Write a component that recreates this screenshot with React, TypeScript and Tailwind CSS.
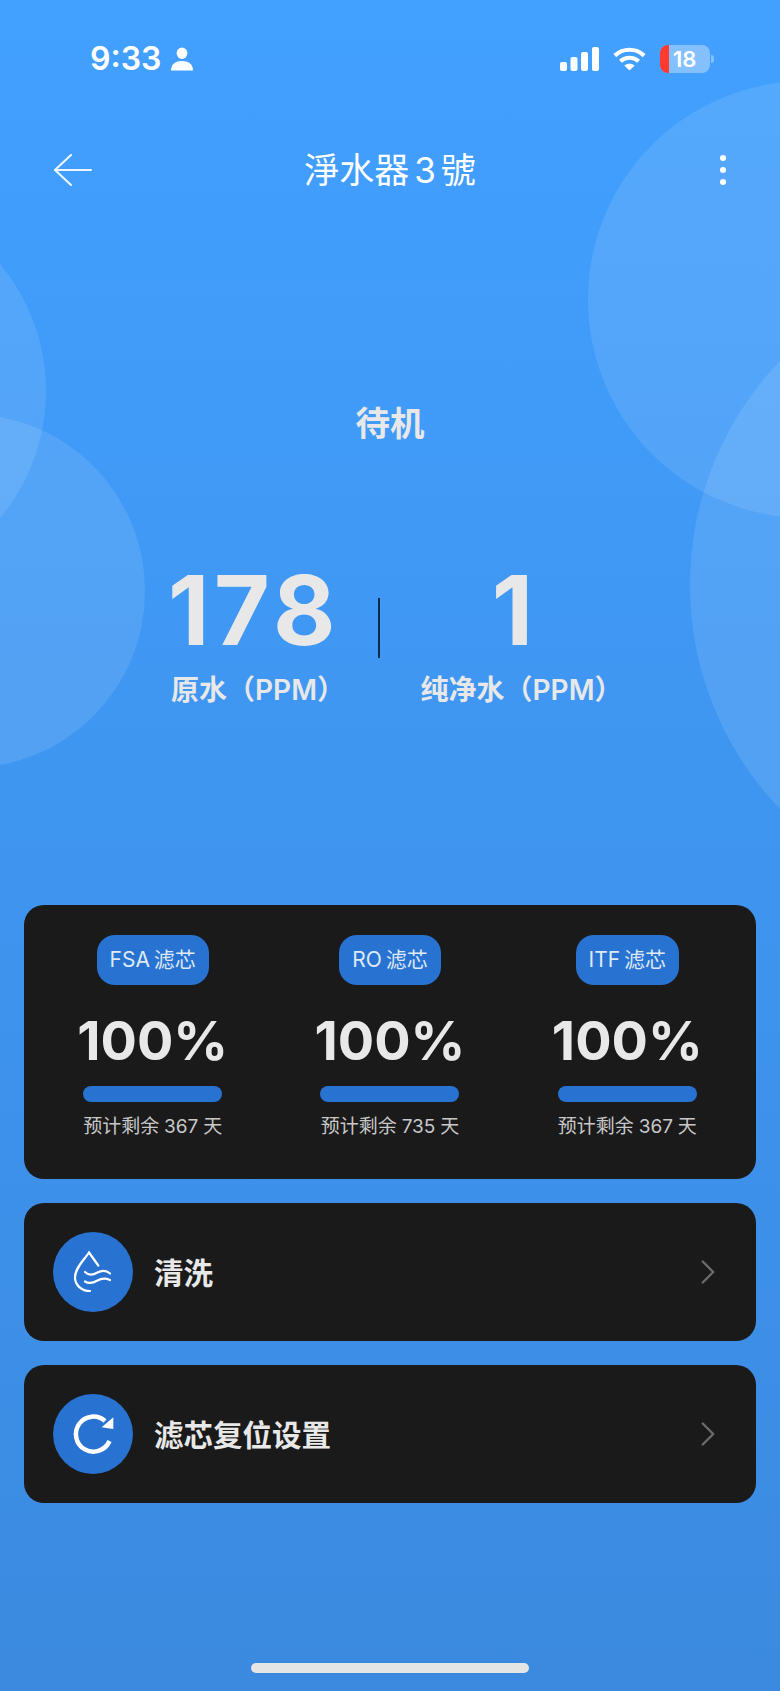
import { ChevronRight } from "lucide-react";

const fontStack = "font-['Inter','Noto_Sans_CJK_SC',sans-serif]";

const filters = [
  { name: "FSA 滤芯", days: 367 },
  { name: "RO 滤芯", days: 735 },
  { name: "ITF 滤芯", days: 367 },
];

function SignalIcon() {
  return (
    <svg width="39" height="24" viewBox="0 0 39 24" fill="#fff">
      <rect x="0" y="15" width="7" height="9" rx="2" />
      <rect x="10.5" y="10" width="7" height="14" rx="2" />
      <rect x="21" y="5" width="7" height="19" rx="2" />
      <rect x="32" y="0" width="7" height="24" rx="2" />
    </svg>
  );
}

function WifiIcon() {
  return (
    <svg width="33" height="24" viewBox="0 0 33 24" fill="none" stroke="#fff" strokeWidth="4.2">
      <path d="M1.8 8.6C10.2 .8 22.8 .8 31.2 8.6" />
      <path d="M7.4 14.2C12.6 9.6 20.4 9.6 25.6 14.2" />
      <path d="M16.5 23.6 11.3 18.6C14.3 16.2 18.7 16.2 21.7 18.6Z" fill="#fff" stroke="none" />
    </svg>
  );
}

function Battery() {
  return (
    <div className="flex items-center gap-[1px]">
      <div className="flex h-[28px] w-[50px] items-center overflow-hidden rounded-[8px] bg-white/35">
        <div className="h-full w-[9px] bg-[#ff3b30]" />
        <span className="ml-[4px] text-[22px] leading-none font-semibold text-white">18</span>
      </div>
      <div className="h-[8px] w-[3px] rounded-r-full bg-white/35" />
    </div>
  );
}

function BackArrow() {
  return (
    <svg width="38" height="32" viewBox="0 0 38 32" fill="none" stroke="#eef6ff" strokeWidth="2" strokeLinecap="round" strokeLinejoin="round">
      <path d="M17 1 1 16 17 31" />
      <path d="M1 16H37" />
    </svg>
  );
}

function DropIcon() {
  return (
    <svg width="80" height="80" viewBox="0 0 80 80" fill="none" stroke="#fff" strokeWidth="2.2" strokeLinecap="round">
      <path d="M45.3 33.5 36 20.5C31 28 22 36 22 45.5 22 53 28.5 59 37 59" />
      <path d="M32 40c4 4 8 3 12.500 .5s9-2 12.500 1" />
      <path d="M32 49.500c4 2.500 8 1.500 12.500-1s9-2 12.500-.5" />
    </svg>
  );
}

function ResetIcon() {
  return (
    <svg width="80" height="80" viewBox="0 0 80 80" fill="none">
      <path d="M52 27A17.5 17.5 0 1 0 56.500 47" stroke="#fff" strokeWidth="4.500" />
      <path d="M60.300 23.300V35L48.700 33.300Z" fill="#fff" />
    </svg>
  );
}

function ActionRow({ label, icon }: { label: string; icon: React.ReactNode }) {
  return (
    <div className="flex h-[138px] items-center rounded-[20px] bg-[#1a1a1a] pr-[27px] pl-[29px]">
      <div className="h-[80px] w-[80px] rounded-full bg-[#2873d1]">{icon}</div>
      <span className="ml-[21px] flex-1 pt-[2px] text-[29.5px] font-semibold text-[#e8e8e8]">{label}</span>
      <ChevronRight size={42} strokeWidth={1.4} className="text-[#6b6b6b]" />
    </div>
  );
}

export default function App() {
  return (
    <div className={`${fontStack} relative flex h-[1691px] w-[780px] flex-col overflow-hidden bg-gradient-to-b from-[#42a0ff] to-[#3b8ae0]`}>
      {/* background bubbles */}
      <div className="absolute top-[81px] left-[588px] h-[437px] w-[437px] rounded-full bg-white/10" />
      <div className="absolute top-[261px] left-[690px] h-[648px] w-[648px] rounded-full bg-white/10" />
      <div className="absolute top-[193px] left-[-350px] h-[396px] w-[396px] rounded-full bg-white/10" />
      <div className="absolute top-[414px] left-[-209px] h-[354px] w-[354px] rounded-full bg-white/10" />

      <div className="relative flex h-[95px] items-end justify-between pr-[66px] pl-[90px]">
        <div className="flex h-[72px] items-center text-white">
          <span className="text-[32px] font-semibold">9:33</span>
          <svg width="22" height="24" viewBox="0 0 23 24" fill="#fff" className="ml-[10px]">
            <ellipse cx="11.500" cy="6" rx="5.600" ry="6" />
            <path d="M0 24C0 17 5 14 11.500 14S23 17 23 24Z" />
          </svg>
        </div>
        <div className="flex h-[72px] items-center gap-[14px]">
          <SignalIcon />
          <WifiIcon />
          <Battery />
        </div>
      </div>

      <div className="relative mt-[35px] flex h-[80px] items-center justify-between px-[54px]">
        <div className="w-[38px]">
          <BackArrow />
        </div>
        <span className="text-[35px] font-normal text-white [word-spacing:-5px]">淨水器 3 號</span>
        <div className="flex w-[38px] flex-col items-end gap-[6px]">
          <div className="h-[6px] w-[6px] rounded-full bg-white" />
          <div className="h-[6px] w-[6px] rounded-full bg-white" />
          <div className="h-[6px] w-[6px] rounded-full bg-white" />
        </div>
      </div>

      <div className="relative mt-[189px] text-center text-[34.500px] leading-[50px] font-semibold text-[#e8e8e8]">待机</div>

      <div className="relative mt-[110px] flex items-end pl-[172px]">
        <div className="flex w-[172px] flex-col items-center">
          <span className="pr-[8px] text-[96px] leading-[103px] font-bold tracking-[4.500px] text-[#e8e8e8]">178</span>
          <span className="mt-[7.500px] text-[28px] leading-[40px] font-semibold whitespace-nowrap text-[#e8e8e8]">原水（PPM）</span>
        </div>
        <div className="mr-[42px] mb-[51.500px] ml-[34px] h-[60px] w-[1.500px] bg-[#0f2a4d]" />
        <div className="flex w-[200px] flex-col items-center">
          <span className="pr-[18px] text-[96px] leading-[103px] font-bold text-[#e8e8e8]">1</span>
          <span className="mt-[7.500px] text-[28px] leading-[40px] font-semibold whitespace-nowrap text-[#e8e8e8]">纯净水（PPM）</span>
        </div>
      </div>

      <div className="relative mt-[195.500px] flex flex-col gap-[24px] px-[24px]">
        <div className="grid h-[274px] grid-cols-3 rounded-[20px] bg-[#1a1a1a] px-[10px] pt-[30px]">
          {filters.map((filter) => (
            <div key={filter.name} className="flex flex-col items-center">
              <div className="flex h-[50px] items-center rounded-[18px] bg-[#2873d1] px-[13px] text-[21px] text-[#dfe9f6] [word-spacing:-2px]">
                {filter.name}
              </div>
              <div className="mt-[24px] text-[54px] leading-[64px] font-bold text-[#e8e8e8]">100%</div>
              <div className="mt-[13px] h-[16px] w-[139px] rounded-full bg-[#2873d1]" />
              <div className="mt-[11px] text-[19px] leading-[28px] text-[#c8c8c8] [word-spacing:-0.5px]">预计剩余 {filter.days} 天</div>
            </div>
          ))}
        </div>
        <ActionRow label="清洗" icon={<DropIcon />} />
        <ActionRow label="滤芯复位设置" icon={<ResetIcon />} />
      </div>

      <div className="absolute bottom-[18px] left-[251px] h-[10px] w-[278px] rounded-full bg-[#e5e5e5]" />
    </div>
  );
}
